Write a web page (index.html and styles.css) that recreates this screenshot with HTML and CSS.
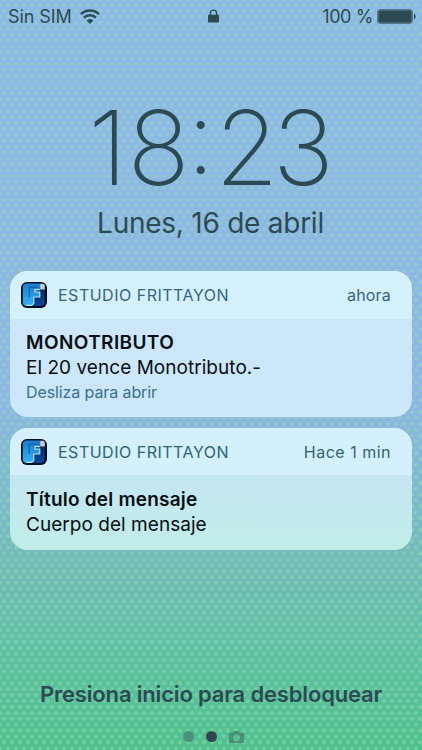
FILE: index.html
```html
<!DOCTYPE html>
<html lang="es">
<head>
    <meta charset="UTF-8">
    <meta name="viewport" content="width=device-width, initial-scale=1.0">
    <title>Pantalla de bloqueo</title>
    <link rel="stylesheet" href="styles.css">
</head>
<body>
    <div class="screen">
        <header class="status-bar">
            <div class="carrier">
                <span class="carrier-name">Sin SIM</span>
                <svg class="wifi" viewBox="0 0 20 15" width="20" height="15">
                    <path d="M1 5.2a13 13 0 0 1 18 0M4 8.7a8.6 8.6 0 0 1 12 0" fill="none" stroke="currentColor" stroke-width="2.5"/>
                    <path d="M6.6 11.6a5 5 0 0 1 6.8 0L10 14.9z" fill="currentColor"/>
                </svg>
            </div>
            <svg class="lock" viewBox="0 0 11 14" width="11" height="14">
                <path d="M2.4 7V4.2a3.1 3.1 0 0 1 6.2 0V7" fill="none" stroke="currentColor" stroke-width="1.4"/>
                <rect y="5.8" width="11" height="7.6" rx="1" fill="currentColor"/>
            </svg>
            <div class="power">
                <span class="percent">100 %</span>
                <svg class="battery" viewBox="0 0 39 15" width="39" height="15">
                    <rect x="0.5" y="0.5" width="35" height="14" rx="2.5" fill="none" stroke="currentColor" opacity="0.6"/>
                    <rect x="1.3" y="1.3" width="33.4" height="12.4" rx="1.5" fill="currentColor"/>
                    <path d="M37 4.8q1.7 0.4 1.7 2.7T37 10.2z" fill="currentColor"/>
                </svg>
            </div>
        </header>

        <div class="clock">1<span class="kern-8">8</span>:<span class="kern-2">2</span>3</div>
        <div class="date">Lunes, 16 de abril</div>

        <main class="notifications">
            <section class="card">
                <div class="card-header">
                    <svg class="app-icon" viewBox="0 0 26 26" width="26" height="26">
                        <defs>
                            <linearGradient id="light" x1="0" y1="0" x2="0" y2="1">
                                <stop offset="0" stop-color="#1c7ccc"/>
                                <stop offset="1" stop-color="#35b2f2"/>
                            </linearGradient>
                            <linearGradient id="dark" x1="0" y1="0" x2="0" y2="1">
                                <stop offset="0" stop-color="#062450"/>
                                <stop offset="1" stop-color="#0b4699"/>
                            </linearGradient>
                            <g id="logo">
                                <rect width="26" height="26" rx="6" fill="#04101f"/>
                                <rect x="1.8" y="1.6" width="22" height="22.4" rx="4.5" fill="url(#dark)"/>
                                <path d="M5.5 1.6H19V7.5H14V10H19V14.8H12.8V22L10.5 24H6q-4.2 0-4.2-4.2V5.5q0-3.9 3.7-3.9z" fill="url(#light)"/>
                                <path d="M8.2 15V5.2H18" fill="none" stroke="#1259a0" stroke-width="1"/>
                                <path d="M18.8 7.6H14V10H18.8V15H12.8V21.4L10.5 23.4H5.5" fill="none" stroke="#c4e6f8" stroke-width="1.1"/>
                                <path d="M19.2 1.8H21.8q2 0 2 2V7.4h-4.6z" fill="#c5ced6"/>
                            </g>
                        </defs>
                        <use href="#logo"/>
                    </svg>
                    <span class="app-name">ESTUDIO FRITTAYON</span>
                    <span class="time">ahora</span>
                </div>
                <div class="card-body">
                    <div class="title title-caps">MONOTRIBUTO</div>
                    <div class="message">El 20 vence Monotributo.-</div>
                    <div class="hint">Desliza para abrir</div>
                </div>
            </section>

            <section class="card card-older">
                <div class="card-header">
                    <svg class="app-icon" viewBox="0 0 26 26" width="26" height="26">
                        <use href="#logo"/>
                    </svg>
                    <span class="app-name">ESTUDIO FRITTAYON</span>
                    <span class="time time-long">Hace 1 min</span>
                </div>
                <div class="card-body">
                    <div class="title">Título del mensaje</div>
                    <div class="message">Cuerpo del mensaje</div>
                </div>
            </section>
        </main>

        <footer class="footer">
            <div class="unlock">Presiona inicio para desbloquear</div>
            <div class="pager">
                <span class="dot"></span>
                <span class="dot dot-active"></span>
                <svg class="camera" viewBox="0 0 15 12" width="15" height="12">
                    <path fill-rule="evenodd" d="M1.3 1.8H4L5 .5Q5.3 0 6 0H9Q9.7 0 10 .5L11 1.8H13.7Q15 1.8 15 3.1V10.7Q15 12 13.7 12H1.3Q0 12 0 10.7V3.1Q0 1.8 1.3 1.8zM7.5 3.6a3.3 3.3 0 1 0 0 6.6 3.3 3.3 0 0 0 0-6.6z" fill="currentColor"/>
                </svg>
            </div>
        </footer>
    </div>
</body>
</html>
```

FILE: styles.css
```css
* {
    box-sizing: border-box;
}
body {
    margin: 0;
    font-family: Inter, 'Liberation Sans', sans-serif;
    color: #2c4a53;
}
.screen {
    display: flex;
    flex-direction: column;
    width: 422px;
    height: 750px;
    overflow: hidden;
    white-space: nowrap;
    background:
        radial-gradient(circle, rgba(145, 222, 182, 0.5) 1.3px, transparent 2.7px) 0 5px / 8px 11.8px,
        radial-gradient(circle, rgba(145, 222, 182, 0.5) 1.3px, transparent 2.7px) 4px 10.9px / 8px 11.8px,
        linear-gradient(#8eb9e6 0, #8eb6e4 400px, #80b9d2 480px, #73bab8 560px, #5fc0a3 650px, #4fc08b 750px);
}
.status-bar {
    display: grid;
    grid-template-columns: 1fr 11px 1fr;
    align-items: center;
    height: 32px;
    padding: 0 6px 0 8px;
    font-size: 18px;
}
.carrier,
.power {
    display: flex;
    align-items: center;
}
.carrier {
    gap: 8px;
}
.carrier-name {
    letter-spacing: -0.1px;
}
.lock {
    margin-left: 1px;
}
.power {
    justify-content: flex-end;
    gap: 4px;
}
.percent {
    letter-spacing: -0.4px;
}
.clock {
    margin-top: 54px;
    height: 123px;
    line-height: 123px;
    font-size: 103px;
    font-weight: 200;
    font-feature-settings: 'case';
    text-align: center;
}
.kern-8 {
    letter-spacing: -3px;
}
.kern-2 {
    letter-spacing: -6px;
}
.date {
    height: 28px;
    line-height: 28px;
    padding-right: 1px;
    font-size: 28px;
    letter-spacing: -0.25px;
    text-align: center;
}
.notifications {
    display: flex;
    flex-direction: column;
    gap: 11px;
    margin: 34px 10px 0;
}
.card {
    height: 146px;
    border-radius: 18px;
    overflow: hidden;
    background: #cbe7f9;
}
.card-older {
    height: 122px;
    background: linear-gradient(#c5e5f3 45px, #c0eee8 122px);
}
.card-header {
    display: flex;
    align-items: center;
    height: 48px;
    padding: 0 21px 0 11px;
    background: #d6f1fe;
    color: #356580;
    font-size: 16px;
}
.card-older .card-header {
    height: 47px;
    background: #d3f0fc;
    color: #316373;
}
.app-name {
    margin-left: 11px;
    letter-spacing: 0.5px;
}
.time {
    margin-left: auto;
    letter-spacing: 0.2px;
}
.time-long {
    letter-spacing: 0.5px;
}
.card-body {
    padding: 11px 16px;
    line-height: 25px;
    font-size: 19px;
    color: #080e12;
}
.card-older .card-body {
    padding-top: 12px;
}
.title {
    font-weight: 600;
    letter-spacing: 0.22px;
}
.title-caps {
    letter-spacing: 0.4px;
}
.message {
    letter-spacing: 0.04px;
}
.hint {
    font-size: 16px;
    letter-spacing: -0.1px;
    color: #3b708e;
}
.footer {
    display: flex;
    flex-direction: column;
    align-items: center;
    margin-top: auto;
}
.unlock {
    height: 30px;
    line-height: 30px;
    font-size: 22px;
    font-weight: 600;
    letter-spacing: -0.17px;
}
.pager {
    display: flex;
    align-items: center;
    gap: 12px;
    height: 27px;
    margin-top: 14px;
    padding-left: 4px;
    color: #498f79;
}
.dot {
    width: 11px;
    height: 11px;
    border-radius: 50%;
    background: #499378;
}
.dot-active {
    background: #304551;
}
```
